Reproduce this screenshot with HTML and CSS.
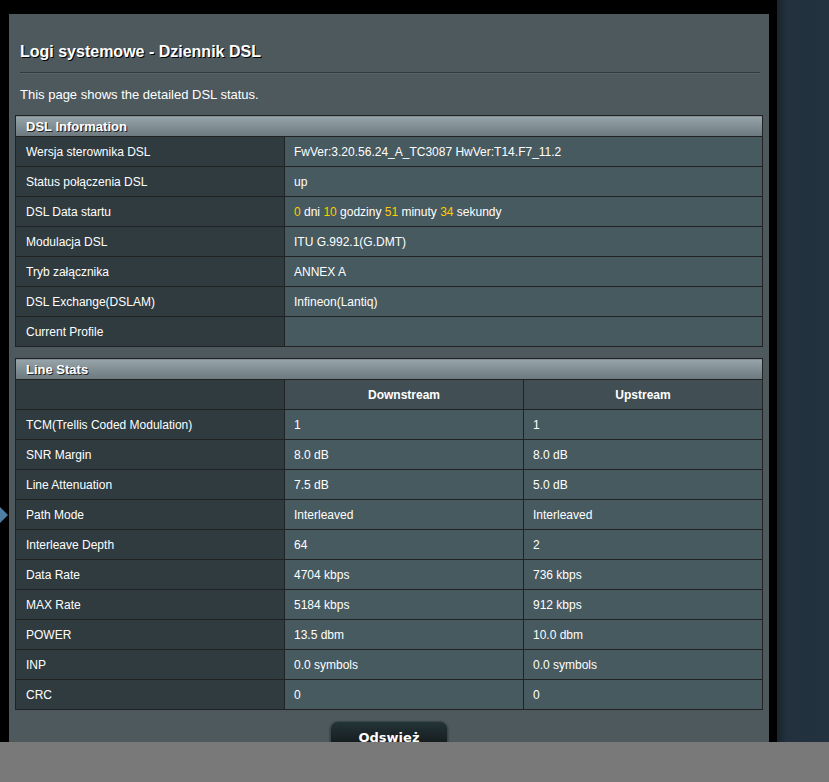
FILE: index.html
```html
<!DOCTYPE html>
<html lang="pl">
<head>
<meta charset="utf-8">
<title>Logi systemowe - Dziennik DSL</title>
<link rel="stylesheet" href="styles.css">
</head>
<body>
<div class="layout">
  <div class="left-gutter"><span class="arrow"></span></div>
  <main class="panel">
    <h1 class="title">Logi systemowe - Dziennik DSL</h1>
    <div class="divider"></div>
    <p class="desc">This page shows the detailed DSL status.</p>

    <table class="form-table">
      <thead>
        <tr><td colspan="2" class="thead">DSL Information</td></tr>
      </thead>
      <tbody>
        <tr><th>Wersja sterownika DSL</th><td>FwVer:3.20.56.24_A_TC3087 HwVer:T14.F7_11.2</td></tr>
        <tr><th>Status połączenia DSL</th><td>up</td></tr>
        <tr><th>DSL Data startu</th><td><span class="num">0</span> dni <span class="num">10</span> godziny <span class="num">51</span> minuty <span class="num">34</span> sekundy</td></tr>
        <tr><th>Modulacja DSL</th><td>ITU G.992.1(G.DMT)</td></tr>
        <tr><th>Tryb załącznika</th><td>ANNEX A</td></tr>
        <tr><th>DSL Exchange(DSLAM)</th><td>Infineon(Lantiq)</td></tr>
        <tr><th>Current Profile</th><td></td></tr>
      </tbody>
    </table>

    <table class="form-table stats">
      <thead>
        <tr><td colspan="3" class="thead">Line Stats</td></tr>
      </thead>
      <tbody>
        <tr class="colhead"><th></th><td>Downstream</td><td>Upstream</td></tr>
        <tr><th>TCM(Trellis Coded Modulation)</th><td>1</td><td>1</td></tr>
        <tr><th>SNR Margin</th><td>8.0 dB</td><td>8.0 dB</td></tr>
        <tr><th>Line Attenuation</th><td>7.5 dB</td><td>5.0 dB</td></tr>
        <tr><th>Path Mode</th><td>Interleaved</td><td>Interleaved</td></tr>
        <tr><th>Interleave Depth</th><td>64</td><td>2</td></tr>
        <tr><th>Data Rate</th><td>4704 kbps</td><td>736 kbps</td></tr>
        <tr><th>MAX Rate</th><td>5184 kbps</td><td>912 kbps</td></tr>
        <tr><th>POWER</th><td>13.5 dbm</td><td>10.0 dbm</td></tr>
        <tr><th>INP</th><td>0.0 symbols</td><td>0.0 symbols</td></tr>
        <tr><th>CRC</th><td>0</td><td>0</td></tr>
      </tbody>
    </table>

    <div class="actions">
      <button class="button-gen" type="button">Odswież</button>
    </div>
  </main>
  <div class="gap"></div>
  <aside class="side"></aside>
</div>
<div class="footer-bar"></div>
</body>
</html>
```

FILE: styles.css
```css
html, body {
  margin: 0;
  padding: 0;
  background: #000;
  height: 100%;
  overflow: hidden;
}

body {
  font-family: "Liberation Sans", Arial, sans-serif;
  color: #fff;
}

.layout {
  display: flex;
  align-items: stretch;
  min-height: 782px;
}

.left-gutter {
  width: 9px;
  flex: none;
  position: relative;
}

.arrow {
  position: absolute;
  left: 0;
  top: 507px;
  width: 0;
  height: 0;
  border-top: 8px solid transparent;
  border-bottom: 8px solid transparent;
  border-left: 8px solid #4c7ea6;
}

.panel {
  width: 760px;
  flex: none;
  margin-top: 14px;
  background: #4d595d;
  padding: 28px 6px 40px 6px;
  box-sizing: border-box;
}

.title {
  margin: 0 0 0 5px;
  font-size: 16px;
  line-height: 19px;
  font-weight: bold;
  text-shadow: 1px 1px 0 #000;
}

.divider {
  margin: 11px 3px 0 5px;
  height: 1px;
  background: #313b3f;
  border-bottom: 1px solid #56646a;
}

.desc {
  margin: 13px 0 12px 5px;
  font-size: 13px;
  line-height: 16px;
}

.form-table {
  width: 748px;
  border-collapse: collapse;
  font-size: 12px;
  margin: 0;
}

.form-table td, .form-table th {
  border: 1px solid #222;
  height: 30px;
  padding: 0 9px;
  box-sizing: border-box;
  text-align: left;
  font-weight: normal;
  vertical-align: middle;
}

.form-table th {
  width: 269px;
  background: #2f3b3f;
  padding-left: 10px;
}

.form-table td {
  background: #475a5f;
}

.form-table td.thead {
  height: 21px;
  padding: 0 10px;
  background: linear-gradient(to bottom, #97a4a9 0%, #6b787d 100%);
  font-size: 13px;
  font-weight: bold;
  text-shadow: 1px 1px 0 #222;
  border-color: #222;
}

.num {
  color: #fc0;
}

.stats {
  margin-top: 11px;
}

.stats td {
  width: 239px;
}

.stats .colhead th {
  background: #2f3b3f;
}

.stats .colhead td {
  background: #414e53;
  text-align: center;
  font-weight: bold;
}

.actions {
  display: flex;
  justify-content: center;
  margin-top: 11px;
}

.button-gen {
  width: 118px;
  height: 34px;
  border: 1px solid #3a4548;
  border-radius: 8px;
  background: linear-gradient(to bottom, #233438 0%, #0f1011 100%);
  color: #fff;
  font-family: "DejaVu Sans", Verdana, sans-serif;
  font-size: 13px;
  font-weight: bold;
  padding: 0;
  line-height: 30px;
  box-shadow: 0 1px 2px rgba(0,0,0,0.5);
}

.gap {
  width: 8px;
  flex: none;
}

.side {
  flex: 1;
  background: linear-gradient(to right, #1a252d 0px, #22313d 10px, #22323e 100%);
}

.footer-bar {
  position: fixed;
  left: 0;
  right: 0;
  bottom: 0;
  height: 40px;
  background: #797979;
}
```
